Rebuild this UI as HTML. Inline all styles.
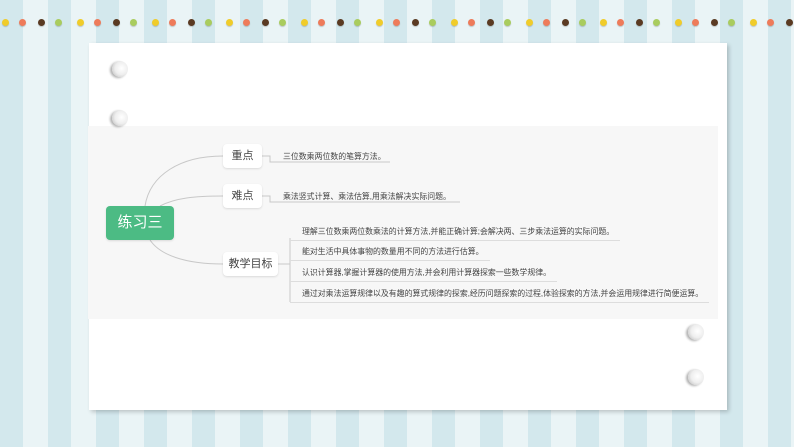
<!DOCTYPE html>
<html><head><meta charset="utf-8"><style>
body{margin:0;width:794px;height:447px;overflow:hidden;position:relative;font-family:"Liberation Sans","Noto Sans CJK SC",sans-serif;
background:repeating-linear-gradient(90deg,#d3e8ed 0,#d3e8ed 23px,#eaf4f6 23px,#eaf4f6 48px);}
.dot{position:absolute;width:7px;height:7px;border-radius:50%;top:19px;box-shadow:0 1px 1px rgba(0,0,0,.2)}
.card{position:absolute;left:89px;top:43px;width:638px;height:367px;background:#fff;box-shadow:2px 2px 4px rgba(0,0,0,.2)}
.panel{position:absolute;left:88px;top:126px;width:630px;height:193px;background:#f7f7f7}
.hole{position:absolute;width:16px;height:16px;border-radius:50%;background:radial-gradient(circle at 60% 45%,#fff 0,#eee 50%,#ccc 80%);box-shadow:-2px 1px 2px rgba(0,0,0,.3)}
.box{position:absolute;background:#fff;border-radius:4px;box-shadow:0 1px 2px rgba(0,0,0,.12);font-size:11px;color:#444;text-align:center}
.t{position:absolute;font-size:7.9px;color:#444;white-space:nowrap;border-bottom:1px solid #ddd;padding-bottom:3px;padding-right:6px}
</style></head><body>
<div id="dots"></div>
<div class="card"></div>
<div class="panel"></div>
<div class="hole" style="left:112px;top:61px"></div>
<div class="hole" style="left:112px;top:110px"></div>
<div class="hole" style="left:688px;top:324px"></div>
<div class="hole" style="left:688px;top:369px"></div>
<svg style="position:absolute;left:0;top:0" width="794" height="447">
<g fill="none" stroke="#c8c8c8" stroke-width="1">
<path d="M145 206 C150 175 180 156 223 156"/>
<path d="M160 206 C175 198 195 196 223 196"/>
<path d="M150 240 C160 255 185 264 223 264"/>
<path d="M262 156 H270 V162 H390"/>
<path d="M262 196 H270 V202 H460"/>
<path d="M278 264 H290"/>
<path d="M290 238 V302"/>
</g></svg>
<div class="box" style="left:106px;top:206px;width:68px;height:34px;line-height:34px;background:#4cbb84;color:#fff;font-size:15px">练习三</div>
<div class="box" style="left:223px;top:144px;width:39px;height:24px;line-height:24px">重点</div>
<div class="box" style="left:223px;top:184px;width:39px;height:24px;line-height:24px">难点</div>
<div class="box" style="left:223px;top:252px;width:55px;height:24px;line-height:24px">教学目标</div>
<div class="t" style="left:283px;top:151px;border:none">三位数乘两位数的笔算方法。</div>
<div class="t" style="left:283px;top:191px;border:none">乘法竖式计算、乘法估算,用乘法解决实际问题。</div>
<div class="t" style="left:290px;top:226px;padding-left:12px">理解三位数乘两位数乘法的计算方法,并能正确计算;会解决两、三步乘法运算的实际问题。</div>
<div class="t" style="left:290px;top:246px;padding-left:12px">能对生活中具体事物的数量用不同的方法进行估算。</div>
<div class="t" style="left:290px;top:267px;padding-left:12px">认识计算器,掌握计算器的使用方法,并会利用计算器探索一些数学规律。</div>
<div class="t" style="left:290px;top:288px;padding-left:12px">通过对乘法运算规律以及有趣的算式规律的探索,经历问题探索的过程,体验探索的方法,并会运用规律进行简便运算。</div>
<script>
var c=['#f0cc2a','#ee7b5a','#5a3a22','#a9cc5e'],o=[0,17,36,53],h='';
for(var g=0;g<11;g++)for(var i=0;i<4;i++){var x=2+g*74.8+o[i];if(x<794)h+='<div class="dot" style="left:'+x+'px;background:'+c[i]+'"></div>';}
document.getElementById('dots').innerHTML=h;
</script>
</body></html>
